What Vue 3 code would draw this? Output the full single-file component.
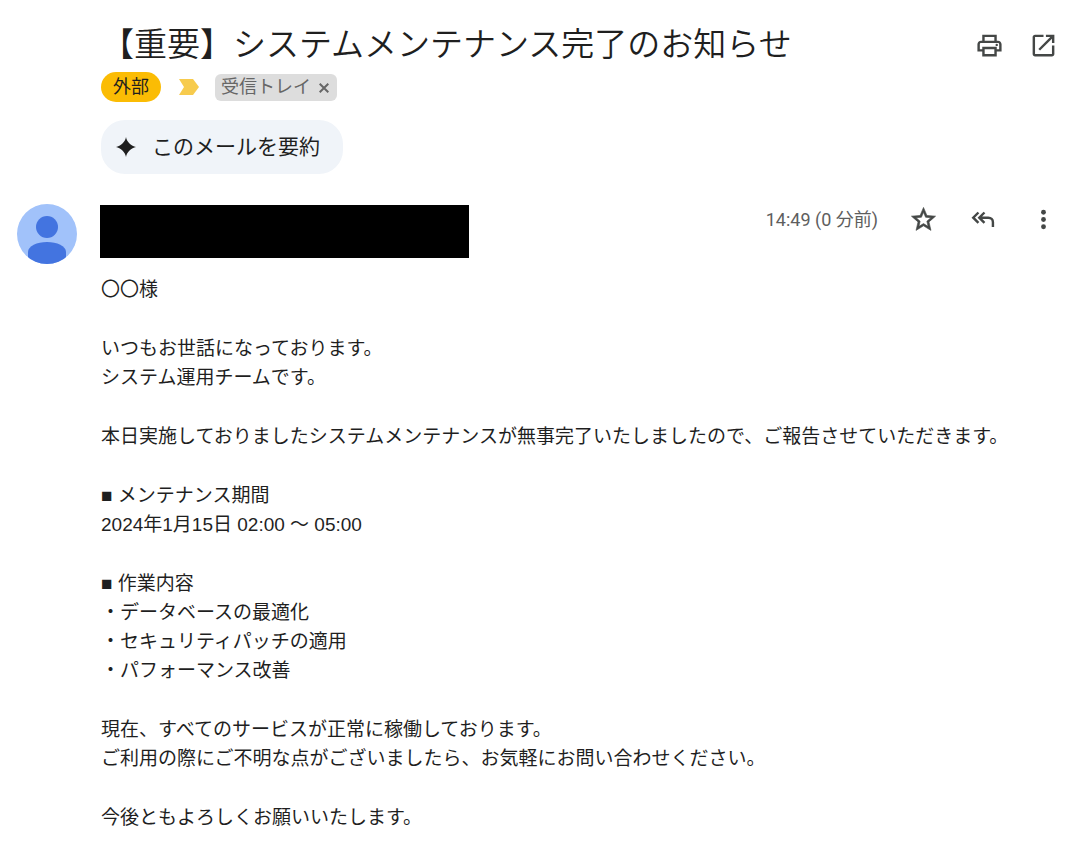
<script setup>
const paragraphs = [
  ['〇〇様'],
  ['いつもお世話になっております。', 'システム運用チームです。'],
  ['本日実施しておりましたシステムメンテナンスが無事完了いたしましたので、ご報告させていただきます。'],
  ['■ メンテナンス期間', '2024年1月15日 02:00 〜 05:00'],
  ['■ 作業内容', '・データベースの最適化', '・セキュリティパッチの適用', '・パフォーマンス改善'],
  ['現在、すべてのサービスが正常に稼働しております。', 'ご利用の際にご不明な点がございましたら、お気軽にお問い合わせください。'],
  ['今後ともよろしくお願いいたします。'],
]
</script>

<template>
  <main class="mail">
    <header class="head">
      <div class="head-main">
        <h1 class="subject">【重要】システムメンテナンス完了のお知らせ</h1>
        <div class="labels">
          <span class="external">外部</span>
          <svg class="important" viewBox="0 0 20 16" aria-hidden="true">
            <path d="M0 0H14L20 8L14 16H0L5 8Z" />
          </svg>
          <span class="inbox">
            受信トレイ
            <button class="remove" type="button" aria-label="受信トレイを削除">
              <svg viewBox="0 0 10 10" aria-hidden="true"><path d="M.7.7L9.3 9.3M9.3.7L.7 9.3" /></svg>
            </button>
          </span>
        </div>
        <button class="summary" type="button">
          <svg viewBox="0 0 20 20" aria-hidden="true">
            <path d="M10 0C10.6 4.500 15.500 9.400 20 10C15.500 10.600 10.600 15.500 10 20C9.400 15.500 4.500 10.600 0 10C4.500 9.400 9.400 4.500 10 0Z" />
          </svg>
          このメールを要約
        </button>
      </div>
      <div class="tools">
        <button class="icon" type="button" aria-label="印刷">
          <svg viewBox="0 0 24 24" aria-hidden="true">
            <path d="M19 8h-1V3H6v5H5c-1.660 0-3 1.340-3 3v6h4v4h12v-4h4v-6c0-1.660-1.340-3-3-3zM8 5h8v3H8V5zm8 12v2H8v-4h8v2zm2-2v-2H6v2H4v-4c0-.55.45-1 1-1h14c.55 0 1 .45 1 1v4h-2z" />
            <circle cx="18" cy="11.500" r="1" />
          </svg>
        </button>
        <button class="icon" type="button" aria-label="新しいウィンドウで開く">
          <svg viewBox="0 0 24 24" aria-hidden="true">
            <path d="M19 19H5V5h7V3H5c-1.110 0-2 .9-2 2v14c0 1.100.89 2 2 2h14c1.100 0 2-.9 2-2v-7h-2v7zM14 3v2h3.590l-9.830 9.830 1.410 1.410L19 6.410V10h2V3h-7z" />
          </svg>
        </button>
      </div>
    </header>

    <section class="message">
      <svg class="avatar" viewBox="0 0 60 60" role="img" aria-label="送信者">
        <defs><clipPath id="avatar-clip"><circle cx="30" cy="30" r="30" /></clipPath></defs>
        <g clip-path="url(#avatar-clip)">
          <rect width="60" height="60" fill="#a1c2fa" />
          <circle cx="30" cy="23" r="11" fill="#4374e0" />
          <path d="M11 60V48C11 42 20 38 30 38S49 42 49 48V60Z" fill="#4374e0" />
        </g>
      </svg>
      <div class="content">
        <div class="meta">
          <div class="sender"></div>
          <div class="status">
            <time class="time">14:49 (0 分前)</time>
            <button class="icon" type="button" aria-label="スター">
              <svg class="star" viewBox="0 0 24 24" aria-hidden="true">
                <path d="M22 9.240l-7.190-.62L12 2 9.190 8.630 2 9.240l5.460 4.730L5.820 21 12 17.270 18.180 21l-1.630-7.030L22 9.240zM12 15.400l-3.760 2.270 1-4.280-3.320-2.880 4.380-.38L12 6.100l1.710 4.040 4.380.38-3.320 2.880 1 4.280L12 15.400z" />
              </svg>
            </button>
            <button class="icon" type="button" aria-label="全員に返信">
              <svg class="stroke" viewBox="0 0 24 24" aria-hidden="true">
                <path d="M7.800 6.200L3.500 10.500L7.800 14.800M12.800 6.200L8.500 10.500L12.800 14.800M9 10.500H16C18.200 10.500 19.800 12 19.800 14.200V18.300" />
              </svg>
            </button>
            <button class="icon" type="button" aria-label="その他">
              <svg viewBox="0 0 24 24" aria-hidden="true">
                <circle cx="12" cy="6" r="2" /><circle cx="12" cy="12" r="2" /><circle cx="12" cy="18" r="2" />
              </svg>
            </button>
          </div>
        </div>
        <div class="body">
          <p v-for="(lines, i) in paragraphs" :key="i">
            <template v-for="(line, j) in lines" :key="j"><br v-if="j" />{{ line }}</template>
          </p>
        </div>
      </div>
    </section>
  </main>
</template>

<style>
body {
  margin: 0;
  background: #fff;
}
</style>

<style scoped>
.mail {
  padding: 21px 22px 32px 17px;
  color: #1f1f1f;
  font-family: "Liberation Sans", "Noto Sans CJK JP", sans-serif;
}
button {
  margin: 0;
  padding: 0;
  border: 0;
  background: none;
  color: inherit;
  font: inherit;
  cursor: pointer;
}
svg {
  display: block;
  flex: none;
}
.head {
  display: flex;
  justify-content: space-between;
  padding-left: 84px;
}
.subject {
  margin: 0;
  font-size: 33px;
  font-weight: 350;
  line-height: 48px;
}
.labels {
  display: flex;
  align-items: center;
  margin-top: 3px;
  height: 30px;
  font-size: 18px;
  line-height: 27px;
}
.external {
  padding: 0 12px;
  border-radius: 15px;
  background: #fbbc04;
  line-height: 30px;
}
.important {
  width: 20px;
  height: 16px;
  margin: 0 16px 0 18px;
  fill: #f7cb4d;
}
.inbox {
  display: flex;
  align-items: center;
  gap: 8px;
  padding: 0 8px 0 6px;
  border-radius: 6px;
  background: #ddd;
  color: #666;
}
.remove {
  padding-top: 2px;
}
.remove svg {
  width: 10px;
  height: 10px;
  fill: none;
  stroke: #666;
  stroke-width: 2;
}
.summary {
  display: flex;
  align-items: center;
  gap: 16px;
  margin-top: 18px;
  padding: 0 23px 0 15px;
  border-radius: 24px;
  background: #f0f4f9;
  font-size: 21px;
  line-height: 54px;
}
.summary svg {
  width: 20px;
  height: 20px;
  fill: #1f1f1f;
}
.tools {
  display: flex;
  align-items: flex-start;
  gap: 25px;
  padding-top: 10px;
}
.icon svg {
  width: 29px;
  height: 29px;
  fill: #444746;
}
.icon .star {
  stroke: #444746;
  stroke-width: 0.5;
}
.icon .stroke {
  fill: none;
  stroke: #444746;
  stroke-width: 2;
}
.message {
  display: flex;
  align-items: flex-start;
  gap: 24px;
  margin-top: 30px;
}
.avatar {
  width: 60px;
  height: 60px;
}
.content {
  flex: 1;
  min-width: 0;
}
.meta {
  display: flex;
  justify-content: space-between;
  align-items: flex-start;
  padding-top: 1px;
}
.sender {
  width: 369px;
  height: 53px;
  margin-left: -1px;
  background: #000;
}
.status {
  display: flex;
  align-items: center;
  gap: 31px;
}
.time {
  color: #5e5e5e;
  font-family: Roboto, "Noto Sans CJK JP", sans-serif;
  font-size: 18px;
  line-height: 29px;
}
.body {
  display: flex;
  flex-direction: column;
  gap: 30px;
  margin-top: 17px;
  font-size: 19px;
  line-height: 29px;
}
.body p {
  margin: 0;
}
</style>
